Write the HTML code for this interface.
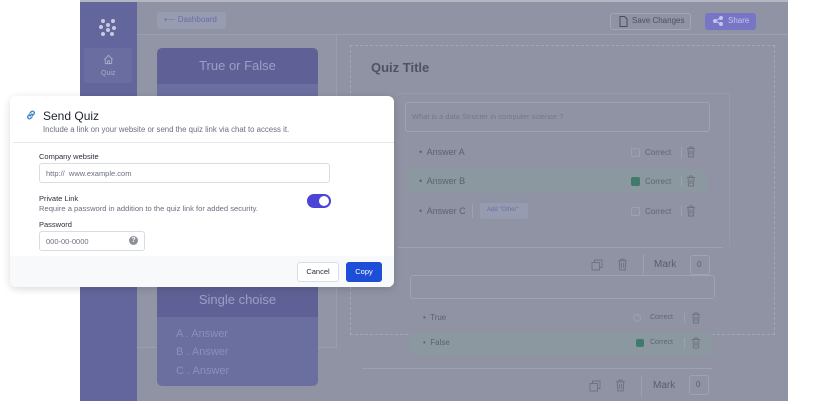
<!DOCTYPE html>
<html><head><style>
*{box-sizing:border-box;margin:0;padding:0}
body{width:815px;height:404px;background:#fff;font-family:"Liberation Sans",sans-serif;position:relative;overflow:hidden}
.a{position:absolute}
.t{position:absolute;white-space:nowrap}
</style></head><body>
<svg width="0" height="0" style="position:absolute"><defs><symbol id="tr" viewBox="0 0 10 12"><path d="M1 2.5h8M3.5 2.5V1h3v1.5M2 2.5l.5 8.5h5l.5-8.5M4 4.5v4.5M6 4.5v4.5" fill="none" stroke="#6e7282" stroke-width=".9"/></symbol><symbol id="cp" viewBox="0 0 12 12"><path d="M3.5 3.5V1h7.5v7.5H8.5M1 3.5h7.5V11H1z" fill="none" stroke="#6e7282" stroke-width=".9"/></symbol></defs></svg>
<div class="a" style="left:80px;top:0;width:708px;height:401px;background:#8f93a3"></div>
<div class="a" style="left:80px;top:0;width:708px;height:2px;background:#b4b7c2"></div>
<div class="a" style="left:80px;top:2px;width:57px;height:399px;background:#63669c"></div>
<svg class="a" style="left:98px;top:17px" width="20" height="20" viewBox="0 0 20 20" fill="#c8c9dd"><circle cx="5" cy="4" r="2"/><circle cx="10" cy="8" r="2"/><circle cx="15" cy="4" r="2"/><circle cx="3" cy="10" r="2"/><circle cx="16" cy="11" r="2"/><circle cx="10" cy="13" r="2"/><circle cx="5" cy="17" r="2"/><circle cx="14" cy="17" r="2"/></svg>
<div class="a" style="left:84px;top:48px;width:48px;height:35px;background:#6a6da0;border-radius:3px"></div>
<svg class="a" style="left:103px;top:54px" width="11" height="11" viewBox="0 0 12 12" fill="none" stroke="#a9abc9" stroke-width="1"><path d="M1.5 6L6 1.5 10.5 6M2.5 5v5.5h7V5M5 10.5V7.5h2v3"/></svg>
<div class="t" style="left:101px;top:70px;font-size:7px;color:#a9abc9">Quiz</div>
<div class="a" style="left:137px;top:34px;width:651px;height:1px;background:#9ca0ae"></div>
<div class="a" style="left:157px;top:12px;width:69px;height:17px;background:#979cb0;border-radius:3px"></div>
<div class="t" style="left:164px;top:15px;font-size:8px;color:#6a6ea6">⟵ Dashboard</div>
<div class="a" style="left:610px;top:13px;width:81px;height:17px;border:1px solid #a3a7b3;border-radius:3px"></div>
<svg class="a" style="left:619px;top:16px" width="9" height="11" viewBox="0 0 9 11" fill="none" stroke="#4a4d5c"><path d="M1 .5h4.5l2.5 2.5v7.5H1z"/></svg>
<div class="t" style="left:632px;top:16px;font-size:8px;color:#4e5161">Save Changes</div>
<div class="a" style="left:705px;top:13px;width:51px;height:17px;background:#7775c6;border-radius:3px"></div>
<svg class="a" style="left:713px;top:16px" width="10" height="10" viewBox="0 0 10 10" fill="#c5c4ea" stroke="#c5c4ea"><circle cx="8" cy="2" r="1.5"/><circle cx="2" cy="5" r="1.5"/><circle cx="8" cy="8" r="1.5"/><path d="M8 2L2 5 8 8" fill="none"/></svg>
<div class="t" style="left:728px;top:16px;font-size:8px;color:#c5c4ea">Share</div>
<div class="a" style="left:137px;top:35px;width:200px;height:313px;border-right:1px solid #9b9fad;border-bottom:1px solid #9b9fad;background:#9195a5"></div>
<div class="a" style="left:157px;top:48px;width:161px;height:40px;background:#5f6196;border-radius:5px 5px 0 0"></div>
<div class="a" style="left:157px;top:84px;width:161px;height:20px;background:#6a6fa0"></div>
<div class="t" style="left:157px;top:58px;width:161px;text-align:center;font-size:13px;color:#9c9fc4">True or False</div>
<div class="a" style="left:157px;top:280px;width:161px;height:106px;background:#6a6fa0;border-radius:0 0 5px 5px"></div>
<div class="a" style="left:157px;top:280px;width:161px;height:37px;background:#5f6196"></div>
<div class="t" style="left:157px;top:292px;width:161px;text-align:center;font-size:13px;color:#9c9fc4">Single choise</div>
<div class="t" style="left:176px;top:325px;font-size:11px;color:#8b8fbc;line-height:18.3px">A . Answer<br>B . Answer<br>C . Answer</div>
<div class="a" style="left:350px;top:45px;width:425px;height:290px;border:1px dashed #a4a8b4"></div>
<div class="t" style="left:371px;top:60px;font-size:13px;font-weight:bold;color:#4e5263">Quiz Title</div>
<div class="a" style="left:398px;top:93px;width:332px;height:154px;border-top:1px solid #969aa9;border-right:1px solid #969aa9"></div>
<div class="a" style="left:405px;top:102px;width:305px;height:30px;border:1px solid #a0a4b0;border-radius:3px"></div>
<div class="t" style="left:412px;top:112px;font-size:7.5px;color:#74788a">What is a data Structer in computer science ?</div>
<div class="a" style="left:407px;top:170px;width:300px;height:23px;background:#8c989f;border-radius:2px"></div>
<div class="t" style="left:419px;top:147px;font-size:9px;color:#5d6171">•&nbsp; Answer A</div>
<div class="t" style="left:419px;top:176px;font-size:9px;color:#5d6171">•&nbsp; Answer B</div>
<div class="t" style="left:419px;top:206px;font-size:9px;color:#5d6171">•&nbsp; Answer C</div>
<div class="a" style="left:472px;top:204px;width:1px;height:14px;background:#9ea2ae"></div>
<div class="a" style="left:480px;top:203px;width:48px;height:16px;background:#969bb0;border-radius:2px"></div>
<div class="t" style="left:487px;top:207px;font-size:6px;color:#6a6ea6">Add "Other"</div>
<div class="a" style="left:631px;top:148px;width:9px;height:9px;border:1px solid #9ea2ae;border-radius:2px"></div>
<div class="a" style="left:631px;top:177px;width:9px;height:9px;background:#3f7a6a;border-radius:2px"></div>
<div class="a" style="left:631px;top:207px;width:9px;height:9px;border:1px solid #9ea2ae;border-radius:2px"></div>
<div class="t" style="left:645px;top:148px;font-size:8px;color:#606475">Correct</div>
<div class="t" style="left:645px;top:177px;font-size:8px;color:#606475">Correct</div>
<div class="t" style="left:645px;top:207px;font-size:8px;color:#606475">Correct</div>
<div class="a" style="left:681px;top:147px;width:1px;height:11px;background:#9ea2ae"></div>
<div class="a" style="left:681px;top:176px;width:1px;height:11px;background:#9ea2ae"></div>
<div class="a" style="left:681px;top:206px;width:1px;height:11px;background:#9ea2ae"></div>
<svg class="a" style="left:686px;top:146px" width="10" height="12"><use href="#tr"/></svg>
<svg class="a" style="left:686px;top:175px" width="10" height="12"><use href="#tr"/></svg>
<svg class="a" style="left:686px;top:205px" width="10" height="12"><use href="#tr"/></svg>
<div class="a" style="left:398px;top:247px;width:325px;height:1px;background:#9ea2ae"></div>
<svg class="a" style="left:591px;top:259px" width="12" height="12"><use href="#cp"/></svg>
<svg class="a" style="left:617px;top:258px" width="11" height="13"><use href="#tr"/></svg>
<div class="a" style="left:643px;top:254px;width:1px;height:22px;background:#9ea2ae"></div>
<div class="t" style="left:654px;top:259px;font-size:10px;color:#595d6d">Mark</div>
<div class="a" style="left:690px;top:255px;width:20px;height:20px;border:1px solid #a0a4b0;border-radius:3px"></div>
<div class="t" style="left:697px;top:260px;font-size:8px;color:#595d6d">0</div>
<div class="a" style="left:410px;top:275px;width:305px;height:24px;border:1px solid #a0a4b0;border-radius:3px"></div>
<div class="a" style="left:410px;top:333px;width:303px;height:22px;background:#8c989f;border-radius:2px"></div>
<div class="t" style="left:423px;top:313px;font-size:8px;color:#5d6171">•&nbsp; True</div>
<div class="t" style="left:423px;top:338px;font-size:8px;color:#5d6171">•&nbsp; False</div>
<div class="a" style="left:633px;top:314px;width:8px;height:8px;border:1px solid #9ea2ae;border-radius:50%"></div>
<div class="a" style="left:636px;top:339px;width:8px;height:8px;background:#3f7a6a;border-radius:2px"></div>
<div class="t" style="left:650px;top:314px;font-size:7px;color:#606475">Correct</div>
<div class="t" style="left:650px;top:339px;font-size:7px;color:#606475">Correct</div>
<div class="a" style="left:684px;top:313px;width:1px;height:10px;background:#9ea2ae"></div>
<div class="a" style="left:684px;top:338px;width:1px;height:10px;background:#9ea2ae"></div>
<svg class="a" style="left:691px;top:312px" width="10" height="12"><use href="#tr"/></svg>
<svg class="a" style="left:691px;top:337px" width="10" height="12"><use href="#tr"/></svg>
<div class="a" style="left:362px;top:368px;width:350px;height:1px;background:#9ea2ae"></div>
<svg class="a" style="left:589px;top:380px" width="12" height="12"><use href="#cp"/></svg>
<svg class="a" style="left:615px;top:379px" width="11" height="13"><use href="#tr"/></svg>
<div class="a" style="left:641px;top:375px;width:1px;height:22px;background:#9ea2ae"></div>
<div class="t" style="left:653px;top:380px;font-size:10px;color:#595d6d">Mark</div>
<div class="a" style="left:689px;top:375px;width:20px;height:20px;border:1px solid #a0a4b0;border-radius:3px"></div>
<div class="t" style="left:696px;top:380px;font-size:8px;color:#595d6d">0</div>
<div class="a" style="left:10px;top:96px;width:384px;height:191px;background:#fff;border-radius:6px;box-shadow:0 2px 8px rgba(0,0,0,.15);overflow:hidden">
 <svg class="a" style="left:15px;top:13px" width="12" height="12" viewBox="0 0 12 12" fill="none" stroke="#3b82c4" stroke-width="1.3" stroke-linecap="round"><path d="M5 7l2-2M4.5 5.5L3 7a1.8 1.8 0 002.5 2.5L7 8M7.5 6.5L9 5a1.8 1.8 0 00-2.5-2.5L5 4"/></svg>
 <div class="t" style="left:33px;top:13px;font-size:12px;color:#1f2330">Send Quiz</div>
 <div class="t" style="left:33px;top:29px;font-size:7.8px;color:#6b7080">Include a link on your website or send the quiz link via chat to access it.</div>
 <div class="a" style="left:3px;top:46px;width:381px;height:1px;background:#e4e6ea"></div>
 <div class="t" style="left:29px;top:56px;font-size:7.5px;color:#2a2e3a">Company website</div>
 <div class="a" style="left:29px;top:67px;width:291px;height:20px;border:1px solid #d9dce1;border-radius:3px"></div>
 <div class="t" style="left:36px;top:73px;font-size:7.5px;color:#6b7080">http://&nbsp; www.example.com</div>
 <div class="t" style="left:29px;top:98px;font-size:7.5px;color:#2a2e3a">Private Link</div>
 <div class="t" style="left:29px;top:108px;font-size:7.6px;color:#6b7080">Require a password in addition to the quiz link for added security.</div>
 <div class="a" style="left:297px;top:98px;width:24px;height:14px;background:#4b44d4;border-radius:7px"></div>
 <div class="a" style="left:309px;top:100px;width:10px;height:10px;background:#fff;border-radius:50%"></div>
 <div class="t" style="left:29px;top:124px;font-size:7.5px;color:#2a2e3a">Password</div>
 <div class="a" style="left:29px;top:135px;width:106px;height:20px;border:1px solid #d9dce1;border-radius:3px"></div>
 <div class="t" style="left:36px;top:141px;font-size:7.5px;color:#6b7080">000-00-0000</div>
 <div class="a" style="left:119px;top:140px;width:9px;height:9px;background:#8c909a;border-radius:50%;color:#fff;font-size:7px;text-align:center;line-height:9px;font-weight:bold">?</div>
 <div class="a" style="left:0;top:160px;width:384px;height:31px;background:#f8f9fb"></div>
 <div class="a" style="left:287px;top:166px;width:42px;height:20px;background:#fff;border:1px solid #d9dce1;border-radius:3px;font-size:7.5px;color:#2a2e3a;text-align:center;line-height:18px">Cancel</div>
 <div class="a" style="left:336px;top:166px;width:36px;height:20px;background:#1d4ed8;border-radius:3px;font-size:7.5px;color:#fff;text-align:center;line-height:20px">Copy</div>
</div>
</body></html>
